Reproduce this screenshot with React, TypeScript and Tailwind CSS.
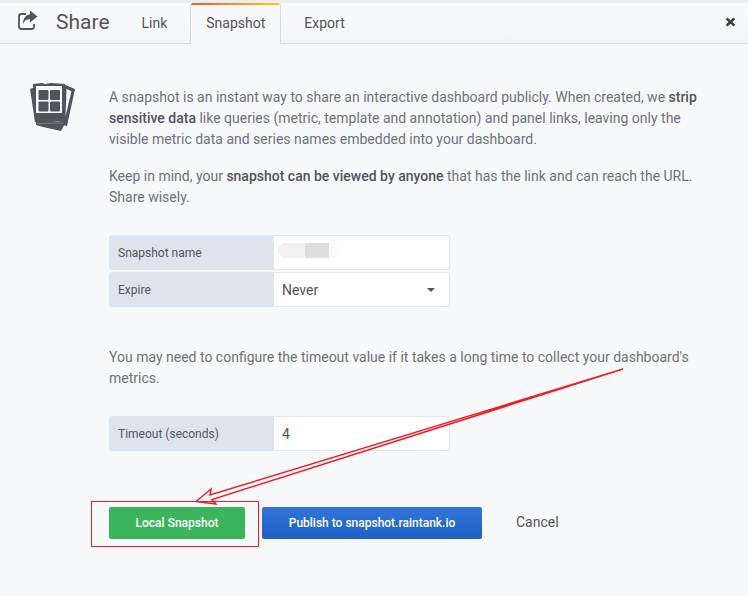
import React from "react";

function ShareIcon() {
  return (
    <svg width="21" height="20" viewBox="0 0 21 20" fill="none">
      <path d="M9 4H4.500A2.500 2.500 0 0 0 2 6.500v10A2.500 2.500 0 0 0 4.500 19h10a2.500 2.500 0 0 0 2.500-2.500V14" stroke="#52545c" strokeWidth="1.800" />
      <path d="M13 .5l7.500 6-7.500 6V9.300c-3.300 0-5.500 1-7 4.700 0-5.500 2.500-9 7-9.800z" fill="#52545c" />
    </svg>
  );
}

function SnapshotIcon() {
  return (
    <svg width="46" height="50" viewBox="0 0 46 50">
      <path d="M33 2l12 5-8 37-8-2z" fill="#52545c" />
      <path d="M36.500 7l5 2.200-6 25z" fill="#f7f8fa" />
      <path d="M0 7l4-1.500L8 41l-3-1z" fill="#52545c" />
      <path d="M6 38l30 2-5 9-18-4-7-2z" fill="#52545c" />
      <path d="M3 2l9-1 3 1 6-1 14 1v37l-30 1z" fill="#52545c" />
      <rect x="6" y="4" width="26" height="27" fill="#f7f8fa" />
      <rect x="8.500" y="8" width="10" height="10" rx="1" fill="#52545c" />
      <rect x="20" y="8" width="10" height="10" rx="1" fill="#52545c" />
      <rect x="8.500" y="19.500" width="10" height="10" rx="1" fill="#52545c" />
      <rect x="20" y="19.500" width="10" height="10" rx="1" fill="#52545c" />
      <path d="M7 41.500l26 -.5" stroke="#8b8d93" strokeWidth=".7" />
    </svg>
  );
}

function Row({ label, children, className = "" }: { label: string; children: React.ReactNode; className?: string }) {
  return (
    <div className={"flex w-[341px] h-[35px] " + className}>
      <div className="w-[165px] shrink-0 bg-[#dde4ed] rounded-l-[3px] pl-[9px] pt-[1px] flex items-center text-[12px] text-[#52545c]">
        {label}
      </div>
      <div className="flex-1 bg-white border border-l-0 border-[#e3e6ef] rounded-r-[3px] pl-[8px] pr-[14px] pt-[1px] flex items-center justify-between text-[14px] text-[#52545c]">
        {children}
      </div>
    </div>
  );
}

export default function App() {
  return (
    <div className="relative w-[748px] h-[596px] overflow-hidden bg-[#f7f8fa] font-['Roboto',sans-serif] text-[#6f7178] text-[14px] leading-[21px]">
      <div className="h-[3px] bg-[#eceef2]" />
      <div className="flex h-[41px] items-stretch border-b border-[#d8d9e3] bg-gradient-to-b from-[#fafbfc] to-[#f3f4f7] pl-[17px] pr-[12px]">
        <div className="mt-[7px] mr-[18px]"><ShareIcon /></div>
        <div className="text-[21px] leading-[39px] text-[#52545c] mr-[32px]">Share</div>
        <div className="text-[14px] leading-[41px] text-[#52545c] mr-[23px]">Link</div>
        <div className="relative w-[91px] h-[41px] -mb-px bg-[#f7f8fa] border-x border-[#d8d9e3] text-center leading-[41px] text-[#52545c] rounded-t-[3px] overflow-hidden">
          <div className="absolute inset-x-0 top-0 h-[2px] bg-gradient-to-r from-[#f05a28] to-[#fbca0a]" />
          Snapshot
        </div>
        <div className="ml-[23px] leading-[41px] text-[#52545c]">Export</div>
        <div className="ml-auto mt-[13px] text-[#3d3f45]">
          <svg width="11" height="12" viewBox="0 0 11 12"><path d="M2.500 1.500L5.500 4.300 8.500 1.500 10.300 3.300 7.500 6 10.300 8.700 8.500 10.500 5.500 7.700 2.500 10.500 .7 8.700 3.500 6 .7 3.300z" fill="currentColor" /></svg>
        </div>
      </div>

      <div className="flex pl-[30px] pt-[38px]">
        <div className="w-[79px] shrink-0"><SnapshotIcon /></div>
        <div className="w-[600px] pt-[5px]">
          <p>
            A snapshot is an instant way to share an interactive dashboard publicly. When created, we{" "}
            <strong className="font-medium text-[#52545c]">strip sensitive data</strong> like queries (metric, template and annotation) and panel links, leaving only the visible metric data and series names embedded into your dashboard.
          </p>
          <p className="mt-[16px]">
            Keep in mind, your <strong className="font-medium text-[#52545c]">snapshot can be viewed by anyone</strong> that has the link and can reach the URL. Share wisely.
          </p>

          <div className="mt-[27px] flex flex-col gap-[2px]">
            <Row label="Snapshot name">
              <span className="flex -ml-[4px] mb-[5px] h-[15px] w-[63px]">
                <span className="w-[27px] rounded-l-full bg-[#f0f0f1]" />
                <span className="w-[24px] bg-[#dedede]" />
                <span className="w-[12px] rounded-r-full bg-[#fafafa]" />
              </span>
            </Row>
            <Row label="Expire">
              <span>Never</span>
              <span className="border-x-[4px] border-x-transparent border-t-[4px] border-t-[#52545c]" />
            </Row>
          </div>

          <p className="mt-[40px] w-[590px]">
            You may need to configure the timeout value if it takes a long time to collect your dashboard's metrics.
          </p>

          <Row label="Timeout (seconds)" className="mt-[27px]">
            <span>4</span>
          </Row>

          <div className="mt-[56px] flex items-center">
            <button className="w-[136px] h-[32px] rounded-[2px] bg-[#3cb45c] text-white text-[12px] font-medium">Local Snapshot</button>
            <button className="ml-[17px] w-[220px] h-[32px] rounded-[2px] bg-gradient-to-b from-[#3274d9] to-[#1f60c4] text-white text-[12px] font-medium">Publish to snapshot.raintank.io</button>
            <button className="ml-[34px] -mt-[2px] text-[#52545c]">Cancel</button>
          </div>
        </div>
      </div>

      <svg className="absolute left-0 top-0 pointer-events-none" width="748" height="596" fill="none">
        <rect x="91.500" y="501.500" width="167" height="45" stroke="#ed1c24" />
        <path d="M196 501.500L211 489 210 495 623 369 212 499.500 216 504z" stroke="#ed1c24" strokeWidth="1.500" />
      </svg>
    </div>
  );
}
